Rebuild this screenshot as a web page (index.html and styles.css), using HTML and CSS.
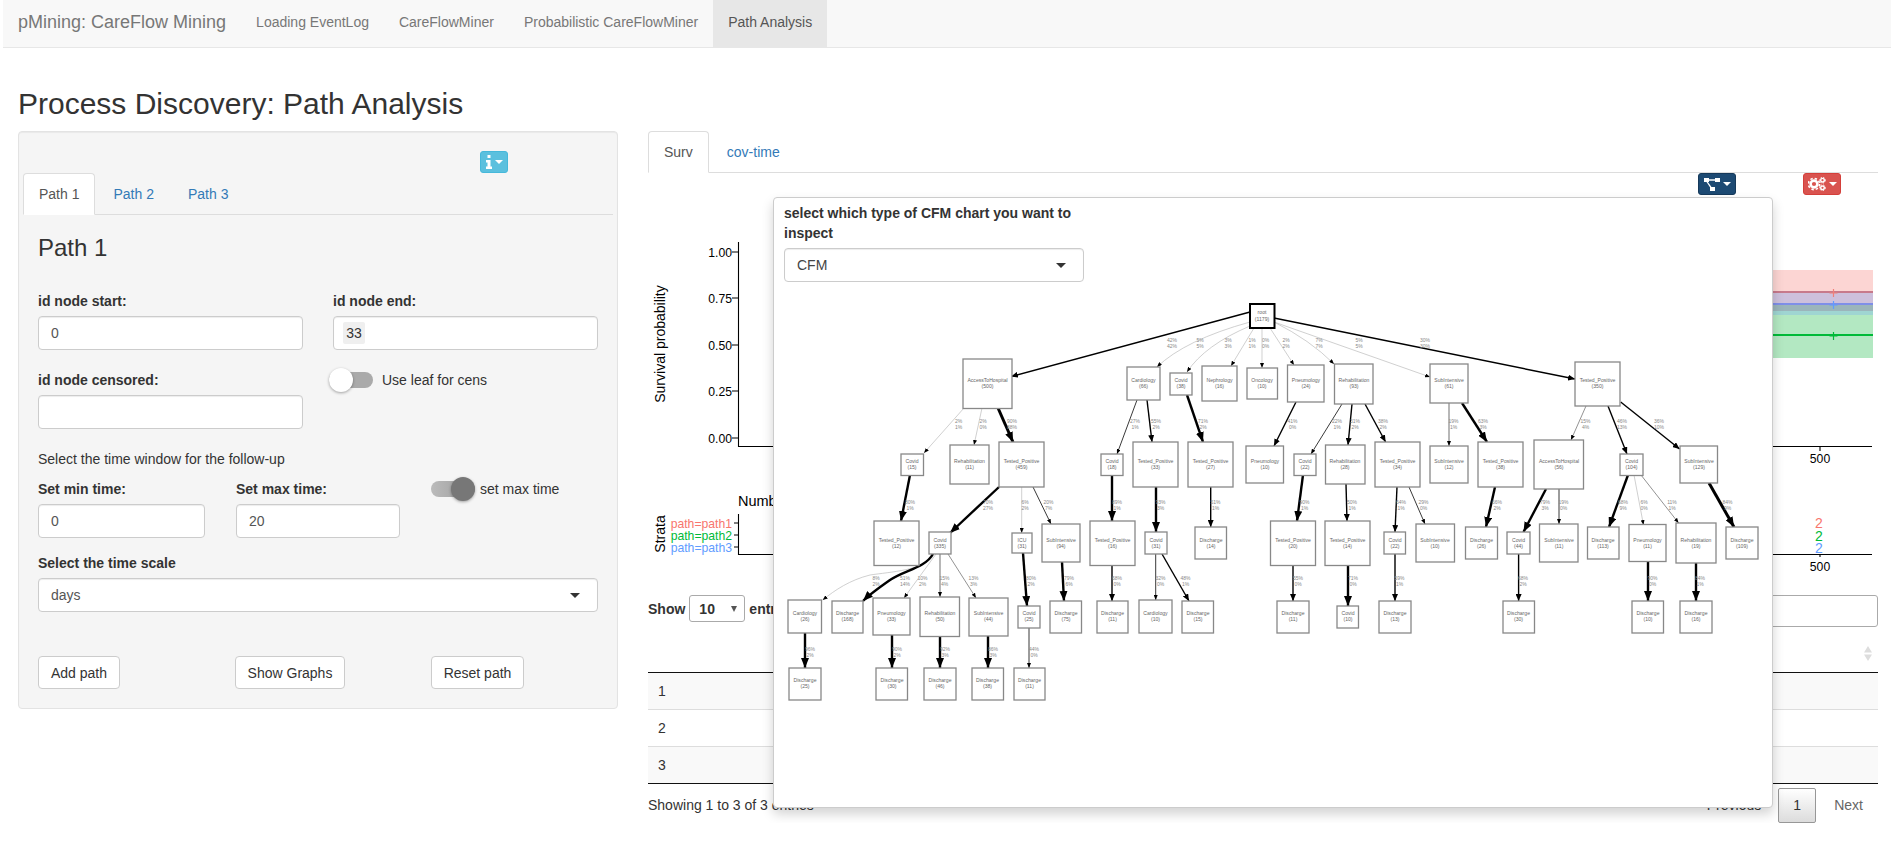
FILE: index.html
```html
<!DOCTYPE html>
<html lang="en">
<head>
<meta charset="utf-8">
<title>pMining: CareFlow Mining</title>
<link rel="stylesheet" href="styles.css">
</head>
<body>
<nav class="navbar">
  <span class="brand">pMining: CareFlow Mining</span>
  <a class="nav-link">Loading EventLog</a>
  <a class="nav-link">CareFlowMiner</a>
  <a class="nav-link">Probabilistic CareFlowMiner</a>
  <a class="nav-link active">Path Analysis</a>
</nav>
<h2 class="page-title">Process Discovery: Path Analysis</h2>
<div class="page">
  <aside class="panel">
    <div class="info-row">
      <button class="icon-btn info-btn">
        <svg class="icon-i" viewBox="0 0 6 14"><path d="M1.500 0h3v3h-3zM0 5h4.500v6.500H6V14H0v-2.500h1.500V7.500H0z"/></svg>
        <span class="caret"></span>
      </button>
    </div>
    <div class="tabs">
      <a class="tab active">Path 1</a>
      <a class="tab">Path 2</a>
      <a class="tab">Path 3</a>
    </div>
    <div class="pane">
      <h3 class="pane-title">Path 1</h3>
      <div class="two-cols">
        <div>
          <label class="field-label">id node start:</label>
          <input class="control" value="0">
        </div>
        <div>
          <label class="field-label">id node end:</label>
          <div class="control chip-control"><span class="chip">33</span></div>
        </div>
      </div>
      <div class="two-cols row-censored">
        <div>
          <label class="field-label">id node censored:</label>
          <input class="control">
        </div>
        <div class="switch-cell switch-offset">
          <span class="switch"><span class="track"></span><span class="knob"></span></span>
          <span>Use leaf for cens</span>
        </div>
      </div>
      <p class="help-line">Select the time window for the follow-up</p>
      <div class="three-cols">
        <div class="min-field">
          <label class="field-label">Set min time:</label>
          <input class="control" value="0">
        </div>
        <div class="max-field">
          <label class="field-label">Set max time:</label>
          <input class="control" value="20">
        </div>
        <div class="switch-cell">
          <span class="switch on"><span class="track"></span><span class="knob"></span></span>
          <span>set max time</span>
        </div>
      </div>
      <label class="field-label scale-label">Select the time scale</label>
      <div class="control select-box scale-select"><span>days</span><span class="caret dark"></span></div>
      <div class="three-cols actions">
        <div><button class="btn btn-add">Add path</button></div>
        <div><button class="btn btn-show">Show Graphs</button></div>
        <div><button class="btn btn-reset">Reset path</button></div>
      </div>
    </div>
  </aside>

  <main class="main">
    <div class="tabs main-tabs">
      <a class="tab active">Surv</a>
      <a class="tab">cov-time</a>
    </div>
    <div class="toolbar">
      <button class="icon-btn btn-navy">
        <svg class="icon-tree" viewBox="0 0 16 13"><path d="M0 0h5v4H0zM11 0h5v4h-5zM6 9h5v4H6zM5 1.300h6v1.400H5zM2.500 4h1.400l3.600 5H5.800z"/></svg>
        <span class="caret"></span>
      </button>
      <button class="icon-btn btn-red">
        <svg class="icon-cogs" viewBox="0 0 18 14">
          <circle class="teeth" cx="6" cy="7" r="5.600"/>
          <circle class="gear" cx="6" cy="7" r="3.400"/>
          <circle class="teeth small" cx="14.500" cy="3.200" r="2.900"/>
          <circle class="gear small" cx="14.500" cy="3.200" r="1.800"/>
          <circle class="teeth small" cx="14.500" cy="10.800" r="2.900"/>
          <circle class="gear small" cx="14.500" cy="10.800" r="1.800"/>
        </svg>
        <span class="caret"></span>
      </button>
    </div>

    <svg class="plot" viewBox="648 196 1230 390" width="1230" height="390">
      <rect x="1772" y="270" width="101" height="88" fill="#fcd5d3"/>
      <rect x="1772" y="293" width="101" height="10" fill="#cdc0dc"/>
      <rect x="1772" y="305" width="101" height="6" fill="#9bb5bb"/>
      <rect x="1772" y="311" width="101" height="4" fill="#9fd5d2"/>
      <rect x="1772" y="315" width="101" height="43" fill="#b3e8c2"/>
      <path class="curve" stroke="#c77a8c" d="M1772 292h101"/>
      <path class="curve" stroke="#7f8fe8" d="M1772 304h101"/>
      <path class="curve" stroke="#00ba38" d="M1772 335h101"/>
      <path class="censor" stroke="#f0807a" d="M1829.500 293h8M1833.500 289v8"/>
      <path class="censor" stroke="#619cff" d="M1829.500 305h8M1833.500 301v8"/>
      <path class="censor" stroke="#00ba38" d="M1829.500 336h8M1833.500 332v8"/>
      <path class="axis" d="M738.500 242V446.500H1872M732 252h6M732 298h6M732 345h6M732 391h6M732 438h6M1820 446v5"/>
      <path class="axis" d="M738.500 514V554.500H1872M734 523h4M734 535h4M734 547h4M1820 554v3"/>
      <g class="tick-text">
        <text x="732" y="256.500">1.00</text>
        <text x="732" y="302.500">0.75</text>
        <text x="732" y="349.500">0.50</text>
        <text x="732" y="395.500">0.25</text>
        <text x="732" y="442.500">0.00</text>
        <text x="732" y="527.500" class="c1">path=path1</text>
        <text x="732" y="539.500" class="c2">path=path2</text>
        <text x="732" y="552" class="c3">path=path3</text>
      </g>
      <g class="center-text">
        <text x="1820" y="462.500">500</text>
        <text x="1820" y="571">500</text>
      </g>
      <g class="risk-counts">
        <text x="1819" y="528" class="c1">2</text>
        <text x="1819" y="541" class="c2">2</text>
        <text x="1819" y="553" class="c3">2</text>
      </g>
      <text class="axis-title" transform="translate(665 344) rotate(-90)">Survival probability</text>
      <text class="axis-title" transform="translate(665 534) rotate(-90)">Strata</text>
      <text class="risk-title" x="738" y="506">Number at risk</text>
    </svg>

    <div class="dt-top">
      <div class="dt-length">Show <span class="dt-select"><span>10</span><span class="caret dark small"></span></span> entries</div>
      <input class="dt-input" aria-label="Search">
    </div>
    <table class="dt-table">
      <thead>
        <tr><th class="col-index"></th><th class="col-sort">
          <svg class="sort-icon" viewBox="0 0 8 15"><path d="M4 0l4 6.500H0zM4 15l4-6.500H0z"/></svg>
        </th></tr>
      </thead>
      <tbody>
        <tr class="odd"><td>1</td><td></td></tr>
        <tr><td>2</td><td></td></tr>
        <tr class="odd"><td>3</td><td></td></tr>
      </tbody>
    </table>
    <div class="dt-foot">
      <span>Showing 1 to 3 of 3 entries</span>
      <div class="pager">
        <span class="pager-prev">Previous</span>
        <span class="pager-current">1</span>
        <span class="pager-next">Next</span>
      </div>
    </div>

    <div class="popup">
      <div class="popup-form">
        <label class="popup-label">select which type of CFM chart you want to inspect</label>
        <div class="control select-box popup-select"><span>CFM</span><span class="caret dark"></span></div>
      </div>
      <svg class="graph" viewBox="774 290 998 516" width="998" height="516">
        <defs>
          <marker id="s" markerUnits="userSpaceOnUse" markerWidth="5" markerHeight="4" refX="5" refY="2" orient="auto"><path d="M0 0L5 2L0 4z"/></marker>
          <marker id="m" markerUnits="userSpaceOnUse" markerWidth="7" markerHeight="6" refX="7" refY="3" orient="auto"><path d="M0 0L7 3L0 6z"/></marker>
          <marker id="l" markerUnits="userSpaceOnUse" markerWidth="10" markerHeight="8" refX="10" refY="4" orient="auto"><path d="M0 0L10 4L0 8z"/></marker>
        </defs>
        <g class="edge e-light" marker-end="url(#s)">
          <path d="M1250 322Q1185 340 1157 367"/>
          <path d="M1250 326Q1205 345 1187 372"/>
          <path d="M1254 328L1231 366"/>
          <path d="M1262 328V368"/>
          <path d="M1270 328L1294 365"/>
          <path d="M1274 322Q1310 340 1334 364"/>
          <path d="M1274 322L1430 377"/>
          <path d="M964 408L924 453"/>
          <path d="M982 408L974 445"/>
          <path d="M1021.700 487V533"/>
          <path d="M1634 475L1643.500 525"/>
          <path d="M936 554L904 598"/>
          <path d="M933 556C925 570 890 572 870 575C850 580 835 590 822.700 600"/>
        </g>
        <g class="edge e-mid" marker-end="url(#s)">
          <path d="M1586 406L1571 440"/>
          <path d="M1641 475L1678.600 523"/>
          <path d="M948 554L976 598"/>
        </g>
        <g class="edge e-gray" marker-end="url(#s)">
          <path d="M1449 403V446"/>
          <path d="M940 554V597"/>
        </g>
        <g class="edge e-thin" marker-end="url(#s)">
          <path d="M1137 400L1117 454"/>
          <path d="M1342 404L1311 454"/>
          <path d="M1033 487L1051 524"/>
          <path d="M1155.700 554V600"/>
          <path d="M1559 489V524"/>
          <path d="M1029 628V668"/>
          <path d="M1409 487L1425 524"/>
        </g>
        <g class="edge e-reg" marker-end="url(#m)">
          <path d="M1250 312L1011 376.600"/>
          <path d="M1274 318L1575 379"/>
          <path d="M1147 400L1152 442"/>
          <path d="M1296 402L1274 446"/>
          <path d="M1352 404L1348 445"/>
          <path d="M1365 404L1385.600 442"/>
          <path d="M1608 406L1627 454"/>
          <path d="M1620.700 402L1679.600 449"/>
          <path d="M1210.700 487V527"/>
          <path d="M1346 484L1347 521"/>
          <path d="M1397 487L1395 532"/>
          <path d="M1112 565V601"/>
          <path d="M1162 554L1189 601"/>
          <path d="M1293 565V601"/>
          <path d="M1395 554V601"/>
          <path d="M1518.600 554V601"/>
        </g>
        <g class="edge e-heavy" marker-end="url(#l)">
          <path d="M1187 395L1203 442"/>
          <path d="M1462 403L1487 442"/>
          <path d="M910 475L901 521"/>
          <path d="M999 487L950 533"/>
          <path d="M1112 475V521"/>
          <path d="M1156 487V532"/>
          <path d="M1303 475L1297 521"/>
          <path d="M1495 487L1486 527"/>
          <path d="M1546 489L1523.500 532"/>
          <path d="M1628 475L1609 527"/>
          <path d="M1023 553L1027 606"/>
          <path d="M1062 562L1064 601"/>
          <path d="M1348 565V606"/>
          <path d="M1648 562V601"/>
          <path d="M1696 563V601"/>
          <path d="M805 633V668"/>
          <path d="M892 635V668"/>
          <path d="M940 637V668"/>
          <path d="M988 636V668"/>
          <path d="M933 554C925 568 905 570 890 580C880 587 870 594 863 601"/>
        </g>
        <g class="edge e-xheavy" marker-end="url(#l)">
          <path d="M998 408L1013 442"/>
          <path d="M1709 483L1734 527"/>
        </g>

        <g class="node">
          <rect class="root" x="1250" y="304" width="24.500" height="24"/>
          <rect x="963" y="359" width="49" height="49.500"/>
          <rect x="1127" y="367" width="33" height="33"/>
          <rect x="1170" y="373" width="22" height="22"/>
          <rect x="1202" y="366" width="35" height="35"/>
          <rect x="1247" y="368" width="30.500" height="31"/>
          <rect x="1287.500" y="365" width="36.500" height="37"/>
          <rect x="1334.500" y="364" width="38.500" height="40"/>
          <rect x="1430" y="364" width="38" height="39"/>
          <rect x="1575" y="362" width="45" height="44"/>

          <rect x="901" y="454" width="22.500" height="21.500"/>
          <rect x="950" y="445" width="39" height="39"/>
          <rect x="999" y="442" width="45" height="45"/>
          <rect x="1101" y="454" width="22" height="21.500"/>
          <rect x="1133" y="442" width="45" height="45"/>
          <rect x="1188" y="442" width="45" height="45"/>
          <rect x="1246" y="446" width="37.500" height="37"/>
          <rect x="1294" y="454" width="22" height="21.500"/>
          <rect x="1325.500" y="445" width="39.500" height="39"/>
          <rect x="1375" y="442" width="45" height="45"/>
          <rect x="1430" y="446" width="38" height="37"/>
          <rect x="1478" y="442" width="45" height="45"/>
          <rect x="1534" y="440" width="49.500" height="49"/>
          <rect x="1620" y="454" width="23" height="21.500"/>
          <rect x="1680" y="446" width="37.500" height="37"/>

          <rect x="874" y="521" width="45" height="44.500"/>
          <rect x="929" y="532" width="22" height="22"/>
          <rect x="1012" y="533" width="20" height="20"/>
          <rect x="1042" y="524" width="38" height="38"/>
          <rect x="1090" y="521" width="45" height="44.500"/>
          <rect x="1145" y="532" width="22" height="22"/>
          <rect x="1195" y="527" width="31.500" height="32"/>
          <rect x="1270.500" y="521" width="45" height="44.500"/>
          <rect x="1325" y="521" width="45" height="44.500"/>
          <rect x="1384" y="532" width="21.500" height="22"/>
          <rect x="1416" y="524" width="38.500" height="38"/>
          <rect x="1465.500" y="527" width="32" height="32"/>
          <rect x="1507" y="532" width="23" height="22"/>
          <rect x="1539.500" y="524" width="38.500" height="38"/>
          <rect x="1587.500" y="527" width="31.500" height="32"/>
          <rect x="1629" y="524.500" width="37" height="37"/>
          <rect x="1676" y="523" width="40" height="40"/>
          <rect x="1726" y="527" width="32" height="32"/>

          <rect x="788" y="600" width="33.500" height="33"/>
          <rect x="832" y="601" width="31" height="32"/>
          <rect x="873" y="598" width="37" height="37"/>
          <rect x="920" y="597" width="39.500" height="39.500"/>
          <rect x="969" y="598" width="39" height="38"/>
          <rect x="1018" y="606" width="22" height="22"/>
          <rect x="1050" y="601" width="31.500" height="32"/>
          <rect x="1097" y="601" width="31" height="32"/>
          <rect x="1139" y="600" width="33" height="33"/>
          <rect x="1182" y="601" width="31.500" height="32"/>
          <rect x="1277" y="601" width="32" height="32"/>
          <rect x="1337" y="606" width="21.500" height="22"/>
          <rect x="1379" y="601" width="32" height="32"/>
          <rect x="1503" y="601" width="31.500" height="32"/>
          <rect x="1632" y="601" width="31.500" height="32"/>
          <rect x="1680" y="601" width="32" height="32"/>

          <rect x="789" y="668" width="32" height="32"/>
          <rect x="876" y="668" width="31.500" height="32"/>
          <rect x="924" y="668" width="32" height="32"/>
          <rect x="972" y="668" width="31.500" height="32"/>
          <rect x="1014" y="668" width="31" height="32"/>
        </g>

        <g class="node-text">
          <text x="1262" y="314">root</text><text x="1262" y="321">(1179)</text>
          <text x="987.500" y="381.500">AccessToHospital</text><text x="987.500" y="388">(500)</text>
          <text x="1143.500" y="381.500">Cardiology</text><text x="1143.500" y="388">(66)</text>
          <text x="1181" y="381.500">Covid</text><text x="1181" y="388">(38)</text>
          <text x="1219.500" y="381.500">Nephrology</text><text x="1219.500" y="388">(16)</text>
          <text x="1262" y="381.500">Oncology</text><text x="1262" y="388">(10)</text>
          <text x="1306" y="381.500">Pneumology</text><text x="1306" y="388">(24)</text>
          <text x="1354" y="381.500">Rehabilitation</text><text x="1354" y="388">(93)</text>
          <text x="1449" y="381.500">SubIntensive</text><text x="1449" y="388">(61)</text>
          <text x="1597.500" y="381.500">Tested_Positive</text><text x="1597.500" y="388">(350)</text>

          <text x="912" y="463">Covid</text><text x="912" y="469">(15)</text>
          <text x="969.500" y="463">Rehabilitation</text><text x="969.500" y="469">(11)</text>
          <text x="1021.500" y="463">Tested_Positive</text><text x="1021.500" y="469">(459)</text>
          <text x="1112" y="463">Covid</text><text x="1112" y="469">(18)</text>
          <text x="1155.500" y="463">Tested_Positive</text><text x="1155.500" y="469">(33)</text>
          <text x="1210.500" y="463">Tested_Positive</text><text x="1210.500" y="469">(27)</text>
          <text x="1265" y="463">Pneumology</text><text x="1265" y="469">(10)</text>
          <text x="1305" y="463">Covid</text><text x="1305" y="469">(22)</text>
          <text x="1345" y="463">Rehabilitation</text><text x="1345" y="469">(28)</text>
          <text x="1397.500" y="463">Tested_Positive</text><text x="1397.500" y="469">(34)</text>
          <text x="1449" y="463">SubIntensive</text><text x="1449" y="469">(12)</text>
          <text x="1500.500" y="463">Tested_Positive</text><text x="1500.500" y="469">(38)</text>
          <text x="1559" y="463">AccessToHospital</text><text x="1559" y="469">(56)</text>
          <text x="1631.500" y="463">Covid</text><text x="1631.500" y="469">(104)</text>
          <text x="1699" y="463">SubIntensive</text><text x="1699" y="469">(129)</text>

          <text x="896.500" y="542">Tested_Positive</text><text x="896.500" y="548">(12)</text>
          <text x="940" y="542">Covid</text><text x="940" y="548">(335)</text>
          <text x="1022" y="542">ICU</text><text x="1022" y="548">(31)</text>
          <text x="1061" y="542">SubIntensive</text><text x="1061" y="548">(94)</text>
          <text x="1112.500" y="542">Tested_Positive</text><text x="1112.500" y="548">(16)</text>
          <text x="1156" y="542">Covid</text><text x="1156" y="548">(31)</text>
          <text x="1211" y="542">Discharge</text><text x="1211" y="548">(14)</text>
          <text x="1293" y="542">Tested_Positive</text><text x="1293" y="548">(20)</text>
          <text x="1347.500" y="542">Tested_Positive</text><text x="1347.500" y="548">(14)</text>
          <text x="1395" y="542">Covid</text><text x="1395" y="548">(22)</text>
          <text x="1435" y="542">SubIntensive</text><text x="1435" y="548">(10)</text>
          <text x="1481.500" y="542">Discharge</text><text x="1481.500" y="548">(26)</text>
          <text x="1518.500" y="542">Covid</text><text x="1518.500" y="548">(44)</text>
          <text x="1559" y="542">SubIntensive</text><text x="1559" y="548">(11)</text>
          <text x="1603" y="542">Discharge</text><text x="1603" y="548">(113)</text>
          <text x="1647.500" y="542">Pneumology</text><text x="1647.500" y="548">(11)</text>
          <text x="1696" y="542">Rehabilitation</text><text x="1696" y="548">(19)</text>
          <text x="1742" y="542">Discharge</text><text x="1742" y="548">(109)</text>

          <text x="805" y="615">Cardiology</text><text x="805" y="621">(26)</text>
          <text x="847.500" y="615">Discharge</text><text x="847.500" y="621">(168)</text>
          <text x="891.500" y="615">Pneumology</text><text x="891.500" y="621">(33)</text>
          <text x="940" y="615">Rehabilitation</text><text x="940" y="621">(50)</text>
          <text x="988.500" y="615">SubIntensive</text><text x="988.500" y="621">(44)</text>
          <text x="1029" y="615">Covid</text><text x="1029" y="621">(25)</text>
          <text x="1066" y="615">Discharge</text><text x="1066" y="621">(75)</text>
          <text x="1112.500" y="615">Discharge</text><text x="1112.500" y="621">(11)</text>
          <text x="1155.500" y="615">Cardiology</text><text x="1155.500" y="621">(10)</text>
          <text x="1198" y="615">Discharge</text><text x="1198" y="621">(15)</text>
          <text x="1293" y="615">Discharge</text><text x="1293" y="621">(11)</text>
          <text x="1348" y="615">Covid</text><text x="1348" y="621">(10)</text>
          <text x="1395" y="615">Discharge</text><text x="1395" y="621">(13)</text>
          <text x="1518.500" y="615">Discharge</text><text x="1518.500" y="621">(30)</text>
          <text x="1648" y="615">Discharge</text><text x="1648" y="621">(10)</text>
          <text x="1696" y="615">Discharge</text><text x="1696" y="621">(16)</text>

          <text x="805" y="682">Discharge</text><text x="805" y="688">(25)</text>
          <text x="892" y="682">Discharge</text><text x="892" y="688">(30)</text>
          <text x="940" y="682">Discharge</text><text x="940" y="688">(46)</text>
          <text x="987.500" y="682">Discharge</text><text x="987.500" y="688">(38)</text>
          <text x="1029.500" y="682">Discharge</text><text x="1029.500" y="688">(11)</text>
        </g>

        <g class="edge-text">
          <text x="1172" y="342">42%</text><text x="1172" y="348">42%</text>
          <text x="1200" y="342">5%</text><text x="1200" y="348">5%</text>
          <text x="1228" y="342">3%</text><text x="1228" y="348">3%</text>
          <text x="1252" y="342">1%</text><text x="1252" y="348">1%</text>
          <text x="1265.500" y="342">0%</text><text x="1265.500" y="348">0%</text>
          <text x="1286" y="342">2%</text><text x="1286" y="348">2%</text>
          <text x="1319" y="342">7%</text><text x="1319" y="348">7%</text>
          <text x="1359" y="342">5%</text><text x="1359" y="348">5%</text>
          <text x="1425" y="342">30%</text><text x="1425" y="348">30%</text>

          <text x="958.500" y="423">2%</text><text x="958.500" y="429">1%</text>
          <text x="983" y="423">2%</text><text x="983" y="429">0%</text>
          <text x="1012" y="423">90%</text><text x="1012" y="429">88%</text>
          <text x="1135" y="423">27%</text><text x="1135" y="429">1%</text>
          <text x="1156" y="423">55%</text><text x="1156" y="429">2%</text>
          <text x="1203" y="423">71%</text><text x="1203" y="429">2%</text>
          <text x="1292.500" y="423">41%</text><text x="1292.500" y="429">0%</text>
          <text x="1337" y="423">22%</text><text x="1337" y="429">1%</text>
          <text x="1355" y="423">31%</text><text x="1355" y="429">2%</text>
          <text x="1383" y="423">38%</text><text x="1383" y="429">2%</text>
          <text x="1453.500" y="423">19%</text><text x="1453.500" y="429">1%</text>
          <text x="1483" y="423">63%</text><text x="1483" y="429">3%</text>
          <text x="1585.500" y="423">15%</text><text x="1585.500" y="429">4%</text>
          <text x="1622" y="423">46%</text><text x="1622" y="429">13%</text>
          <text x="1659" y="423">36%</text><text x="1659" y="429">10%</text>

          <text x="910" y="504">80%</text><text x="910" y="509.500">1%</text>
          <text x="988" y="504">70%</text><text x="988" y="509.500">27%</text>
          <text x="1025" y="504">6%</text><text x="1025" y="509.500">2%</text>
          <text x="1048.500" y="504">20%</text><text x="1048.500" y="509.500">7%</text>
          <text x="1117" y="504">89%</text><text x="1117" y="509.500">1%</text>
          <text x="1160.500" y="504">93%</text><text x="1160.500" y="509.500">3%</text>
          <text x="1215.500" y="504">51%</text><text x="1215.500" y="509.500">1%</text>
          <text x="1304.500" y="504">90%</text><text x="1304.500" y="509.500">1%</text>
          <text x="1352" y="504">50%</text><text x="1352" y="509.500">1%</text>
          <text x="1401" y="504">64%</text><text x="1401" y="509.500">1%</text>
          <text x="1423.500" y="504">29%</text><text x="1423.500" y="509.500">0%</text>
          <text x="1497" y="504">66%</text><text x="1497" y="509.500">2%</text>
          <text x="1545" y="504">79%</text><text x="1545" y="509.500">3%</text>
          <text x="1563.500" y="504">19%</text><text x="1563.500" y="509.500">0%</text>
          <text x="1623" y="504">68%</text><text x="1623" y="509.500">9%</text>
          <text x="1644" y="504">6%</text><text x="1644" y="509.500">0%</text>
          <text x="1672" y="504">11%</text><text x="1672" y="509.500">1%</text>
          <text x="1727.500" y="504">84%</text><text x="1727.500" y="509.500">9%</text>

          <text x="876" y="580">8%</text><text x="876" y="586">2%</text>
          <text x="905" y="580">51%</text><text x="905" y="586">14%</text>
          <text x="922.500" y="580">10%</text><text x="922.500" y="586">2%</text>
          <text x="944.500" y="580">15%</text><text x="944.500" y="586">4%</text>
          <text x="973.500" y="580">13%</text><text x="973.500" y="586">3%</text>
          <text x="1031" y="580">80%</text><text x="1031" y="586">2%</text>
          <text x="1069" y="580">79%</text><text x="1069" y="586">6%</text>
          <text x="1117" y="580">68%</text><text x="1117" y="586">0%</text>
          <text x="1160.500" y="580">32%</text><text x="1160.500" y="586">0%</text>
          <text x="1185.500" y="580">48%</text><text x="1185.500" y="586">1%</text>
          <text x="1298" y="580">55%</text><text x="1298" y="586">0%</text>
          <text x="1353" y="580">71%</text><text x="1353" y="586">0%</text>
          <text x="1399.500" y="580">59%</text><text x="1399.500" y="586">1%</text>
          <text x="1523" y="580">68%</text><text x="1523" y="586">2%</text>
          <text x="1652.500" y="580">90%</text><text x="1652.500" y="586">0%</text>
          <text x="1700" y="580">84%</text><text x="1700" y="586">1%</text>

          <text x="810" y="651">96%</text><text x="810" y="657">2%</text>
          <text x="897" y="651">90%</text><text x="897" y="657">2%</text>
          <text x="945" y="651">92%</text><text x="945" y="657">3%</text>
          <text x="993" y="651">86%</text><text x="993" y="657">3%</text>
          <text x="1034" y="651">44%</text><text x="1034" y="657">0%</text>
        </g>
      </svg>
    </div>
  </main>
</div>
</body>
</html>
```

FILE: styles.css
```css
* { box-sizing: border-box; }
html, body { margin: 0; padding: 0; }
body {
  font-family: "Liberation Sans", Arial, sans-serif;
  font-size: 14px;
  line-height: 20px;
  color: #333;
  background: #fff;
  overflow: hidden;
}

.navbar {
  display: flex;
  height: 48px;
  margin-left: 3px;
  padding-left: 15px;
  background: #f8f8f8;
  border-bottom: 1px solid #e7e7e7;
  color: #777;
}
.brand { font-size: 18px; line-height: 44px; margin-right: 15px; }
.nav-link { height: 47px; line-height: 44px; padding: 0 15px; }
.nav-link.active { background: #e7e7e7; color: #555; }

.page-title {
  margin: 39px 0 10px 18px;
  font-size: 30px;
  font-weight: 400;
  line-height: 33px;
  height: 34px;
}

.page { display: flex; gap: 30px; padding: 0 13px 0 18px; }

.panel {
  width: 600px;
  height: 578px;
  flex: none;
  padding: 19px 4px 19px 4px;
  background: #f5f5f5;
  border: 1px solid #e3e3e3;
  border-radius: 4px;
  box-shadow: inset 0 1px 1px rgba(0, 0, 0, .05);
}
.info-row { height: 22px; padding-left: 457px; }

.icon-btn {
  display: flex;
  align-items: center;
  justify-content: center;
  gap: 3px;
  height: 22px;
  padding: 0;
  border: 1px solid transparent;
  border-radius: 3px;
}
.info-btn { width: 28px; background: #5bc0de; border-color: #46b8da; }
.btn-navy { width: 38px; background: #1d4a73; border-color: #16395a; }
.btn-red { width: 38px; background: #d9534f; border-color: #d43f3a; margin-left: 67px; }

.icon-i { width: 6px; height: 14px; fill: #fff; }
.icon-tree { width: 16px; height: 13px; fill: #fff; }
.icon-cogs { width: 18px; height: 14px; }
.gear { fill: none; stroke: #fff; stroke-width: 2.600; }
.gear.small { stroke-width: 1.400; }
.teeth { fill: none; stroke: #fff; stroke-width: 1.600; stroke-dasharray: 2.400 2; }
.teeth.small { stroke-width: 1; stroke-dasharray: 1.400 1.400; }

.caret {
  display: inline-block;
  width: 0;
  height: 0;
  border-top: 4px solid #fff;
  border-left: 4px solid transparent;
  border-right: 4px solid transparent;
}
.caret.dark { border-top: 5px solid #333; border-left-width: 5px; border-right-width: 5px; }
.caret.dark.small { border-top-width: 6px; border-left-width: 3.500px; border-right-width: 3.500px; border-top-color: #555; }

.tabs { display: flex; height: 42px; border-bottom: 1px solid #ddd; }
.tab {
  height: 42px;
  margin-right: 2px;
  padding: 10px 15px;
  color: #337ab7;
  border: 1px solid transparent;
  border-radius: 4px 4px 0 0;
}
.tab.active {
  color: #555;
  background: #fff;
  border-color: #ddd #ddd #fff;
}

.pane { padding: 0 15px; }
.pane-title {
  margin: 20px 0 30px;
  font-size: 24px;
  font-weight: 400;
  line-height: 26px;
}
.field-label { display: block; margin-bottom: 5px; font-weight: 700; }

.control {
  display: block;
  width: 100%;
  height: 34px;
  padding: 6px 12px;
  font: inherit;
  color: #555;
  background: #fff;
  border: 1px solid #ccc;
  border-radius: 4px;
  box-shadow: inset 0 1px 1px rgba(0, 0, 0, .075);
}
.chip-control { padding: 5px 9px; }
.chip {
  display: block;
  width: 22px;
  height: 22px;
  line-height: 22px;
  text-align: center;
  color: #333;
  background: #efefef;
  border-radius: 2px;
}

.two-cols { display: grid; grid-template-columns: 265px 265px; column-gap: 30px; }
.row-censored { margin-top: 20px; }

.switch-cell { display: flex; align-items: flex-start; gap: 9px; margin-top: -2px; line-height: 24px; }
.switch-offset { margin-left: -4px; }
.switch { position: relative; display: block; width: 44px; height: 24px; flex: none; }
.switch.on + span { margin-left: -4px; }
.track {
  display: block;
  height: 16px;
  margin-top: 4px;
  background: #aaa;
  border-radius: 8px;
}
.knob {
  position: absolute;
  top: 0;
  left: 0;
  width: 24px;
  height: 24px;
  background: #fff;
  border-radius: 50%;
  box-shadow: 0 1px 3px rgba(0, 0, 0, .35);
}
.switch.on .track { background: linear-gradient(90deg, #bbb, #999); }
.switch.on .knob { left: 20px; background: #777; }

.help-line { margin: 20px 0 10px; }
.three-cols { display: grid; grid-template-columns: 198px 195px auto; }
.min-field { width: 167px; }
.max-field { width: 164px; }
.scale-label { margin-top: 15px; }
.select-box { display: flex; align-items: center; justify-content: space-between; padding-right: 17px; }
.scale-select { width: 560px; }
.actions { margin-top: 44px; }

.btn {
  height: 33px;
  padding: 0;
  font: inherit;
  white-space: nowrap;
  color: #333;
  background: #fff;
  border: 1px solid #ccc;
  border-radius: 4px;
}
.btn-add { width: 82px; }
.btn-show { width: 110px; margin-left: -1px; }
.btn-reset { width: 93px; }

.main { position: relative; flex: 1; }
.main-tabs { height: 42px; }
.toolbar { display: flex; height: 23px; padding-left: 1050px; }

.plot { display: block; }
.plot text { font-family: "Liberation Sans", Arial, sans-serif; }
.axis { fill: none; stroke: #000; stroke-width: 1.100; }
.curve { fill: none; stroke-width: 2; }
.censor { fill: none; stroke-width: 1.200; }
.tick-text { font-size: 12.200px; text-anchor: end; fill: #000; }
.center-text { font-size: 12.200px; text-anchor: middle; fill: #000; }
.risk-counts { font-size: 14px; text-anchor: middle; }
.axis-title { font-size: 14px; text-anchor: middle; fill: #000; }
.risk-title { font-size: 14.500px; fill: #000; }
.c1 { fill: #f8766d; }
.c2 { fill: #00ba38; }
.c3 { fill: #619cff; }

.dt-top {
  display: flex;
  justify-content: space-between;
  height: 32px;
  margin-top: 9px;
}
.dt-length { display: flex; align-items: center; gap: 4px; height: 27px; font-weight: 700; }
.dt-select {
  display: flex;
  align-items: center;
  justify-content: space-between;
  width: 56px;
  height: 27px;
  padding: 0 7px 0 9px;
  background: #fff;
  border: 1px solid #aaa;
  border-radius: 3px;
}
.dt-input { width: 200px; height: 32px; border: 1px solid #aaa; border-radius: 3px; background: #fff; }

.dt-table { width: 100%; margin-top: 10px; border-collapse: collapse; }
.dt-table th { height: 35px; padding: 0; border-bottom: 1px solid #111; }
.col-sort { text-align: right; vertical-align: top; }
.sort-icon { display: block; width: 8px; height: 15px; margin: 9px 6px 0 auto; fill: #ddd; }
.dt-table td { height: 37px; padding: 8px 10px; border-top: 1px solid #ddd; }
.dt-table tbody tr:first-child td { border-top: 0; }
.dt-table tbody tr:last-child td { border-bottom: 1px solid #111; }
.dt-table .odd { background: #f9f9f9; }

.dt-foot {
  display: flex;
  align-items: center;
  justify-content: space-between;
  margin-top: 4px;
  color: #333;
}
.pager { display: flex; align-items: center; padding-right: 15px; }
.pager-prev { margin-right: 17px; }
.pager-current {
  width: 38px;
  height: 35px;
  line-height: 33px;
  text-align: center;
  background: linear-gradient(#fff, #dcdcdc);
  border: 1px solid #979797;
  border-radius: 2px;
}
.pager-next { margin-left: 18px; color: #666; }

.popup {
  position: absolute;
  left: 125px;
  top: 66px;
  width: 1000px;
  height: 611px;
  background: #fff;
  border: 1px solid #ccc;
  border-radius: 4px;
  box-shadow: 0 6px 12px rgba(0, 0, 0, .175);
}
.popup-form { height: 92px; padding: 5px 10px 0; }
.popup-label { display: block; width: 300px; margin-bottom: 5px; font-weight: 700; }
.popup-select { width: 300px; color: #444; }

.graph { display: block; }
.graph text { font-family: "Liberation Sans", Arial, sans-serif; text-anchor: middle; }
.edge path { fill: none; }
.e-light path { stroke: #bbb; stroke-width: .7; }
.e-mid path { stroke: #777; stroke-width: .8; }
.e-gray path { stroke: #999; stroke-width: 1.400; }
.e-thin path { stroke: #222; stroke-width: .9; }
.e-reg path { stroke: #000; stroke-width: 1.400; }
.e-heavy path { stroke: #000; stroke-width: 2.400; }
.e-xheavy path { stroke: #000; stroke-width: 3; }
.node rect { fill: #fff; stroke: #888; stroke-width: 1.300; }
.node .root { stroke: #000; stroke-width: 2; }
.node-text { font-size: 5.100px; fill: #666; }
.edge-text { font-size: 5px; fill: #888; }
```
